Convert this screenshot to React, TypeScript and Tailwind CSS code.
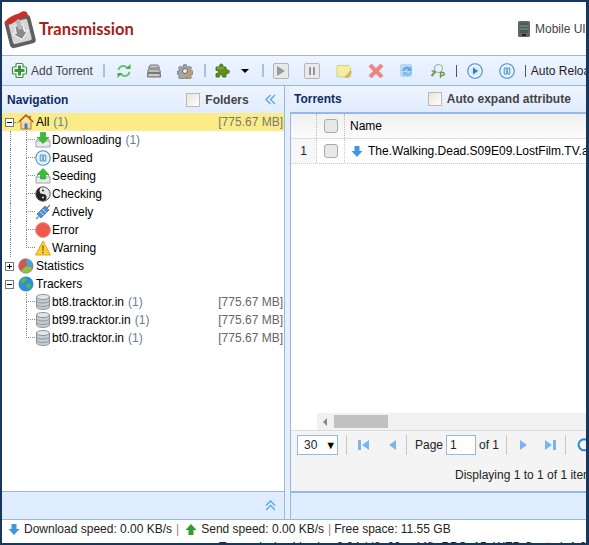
import type { ReactNode } from "react";

const FONT = "font-['Liberation_Sans',Arial,sans-serif]";

// Toolbar + tree icons, all 16x16 unless stated
function PlusIcon() {
  return (
    <svg width="17" height="17" viewBox="0 0 17 17">
      <path d="M6 1.500h5a1 1 0 0 1 1 1V5h2.500a1 1 0 0 1 1 1v5a1 1 0 0 1-1 1H12v2.500a1 1 0 0 1-1 1H6a1 1 0 0 1-1-1V12H2.500a1 1 0 0 1-1-1V6a1 1 0 0 1 1-1H5V2.500a1 1 0 0 1 1-1z" fill="#fff" stroke="#3f8f3f" strokeWidth="1.200" />
      <path d="M7 3.500h3V7h3.500v3H10v3.500H7V10H3.500V7H7z" fill="#2e9e34" />
    </svg>
  );
}

function ReloadIcon() {
  return (
    <svg width="16" height="16" viewBox="0 0 16 16" fill="none" stroke="#6cc06c" strokeWidth="2">
      <path d="M2.500 7c.6-2.600 2.600-4 5-4 1.600 0 2.800.6 3.800 1.800" />
      <path d="M13.500 9c-.6 2.600-2.600 4-5 4-1.600 0-2.800-.6-3.800-1.800" />
      <path d="M9.500 6h5V1z" fill="#4aa84a" stroke="none" />
      <path d="M6.500 10h-5v5z" fill="#4aa84a" stroke="none" />
    </svg>
  );
}

function DrivesIcon() {
  return (
    <svg width="16" height="16" viewBox="0 0 16 16">
      <path d="M4 2h8l1.500 3h-11z" fill="#c9c9c9" stroke="#777" />
      <path d="M2.500 6h11l1 3.500h-13z" fill="#bdbdbd" stroke="#777" />
      <path d="M1.500 10.500h13V14h-13z" fill="#aaa" stroke="#777" />
      <path d="M3 12h10" stroke="#eee" />
    </svg>
  );
}

function GearIcon() {
  return (
    <svg width="16" height="16" viewBox="0 0 16 16">
      <path d="M6.500 1h3l.4 2 1.700.7 1.700-1.100 2 2-1.100 1.700.7 1.700 2 .4v3l-2 .4-.7 1.700 1.100 1.700-2 2-1.700-1.100-1.700.7-.4 2h-3l-.4-2-1.700-.7-1.700 1.100-2-2 1.100-1.700-.7-1.700-2-.4v-3l2-.4.7-1.700-1.100-1.700 2-2 1.700 1.100 1.700-.7z" transform="translate(.8 .8) scale(.9)" fill="#a5a5a5" stroke="#666" strokeWidth=".8" />
      <circle cx="8" cy="8" r="2.500" fill="#eee" stroke="#666" />
      <path d="M15 7 9.500 13l-1.500 2 2.200-.7L16 8.500z" fill="#f0b040" stroke="#b5772a" strokeWidth=".6" />
    </svg>
  );
}

function PuzzleIcon() {
  return (
    <svg width="16" height="16" viewBox="0 0 16 16">
      <path d="M1 4h3.500C4 2 5 1 6.200 1S8.500 2 8 4h3v3c2-.5 3.500.4 3.500 1.700S13 11 11 10.500V14H7.500c.4-1.500-.4-2.300-1.500-2.300S4.100 12.500 4.500 14H1v-3.500c1.400.4 2.300-.4 2.300-1.500S2.400 7 1 7.500z" fill="#5f8f1f" stroke="#3d6512" strokeWidth=".8" />
      <path d="M2 5h7" stroke="#93c04a" />
    </svg>
  );
}

function Caret() {
  return <span className="block h-0 w-0 border-x-[4px] border-t-[4px] border-x-transparent border-t-black" />;
}

function BoxIcon({ children }: { children: ReactNode }) {
  return (
    <span className="flex h-4 w-4 items-center justify-center rounded-[2px] border border-[#b5b5b5] bg-[#e9e9e9]">
      {children}
    </span>
  );
}

function NoteIcon() {
  return (
    <svg width="16" height="16" viewBox="0 0 16 16">
      <path d="M1 2.500h11.500l2 2V14H1z" fill="#f4eea5" stroke="#d6cf86" />
      <path d="M14.500 8 9 14l3 .4L15.500 9z" fill="#e8b765" stroke="#bc9355" strokeWidth=".6" />
    </svg>
  );
}

function CrossIcon() {
  return (
    <svg width="16" height="16" viewBox="0 0 16 16">
      <path d="M1 3.500 3.500 1 8 5.500 12.500 1 15 3.500 10.500 8l4.500 4.500-2.500 2.500L8 10.500 3.500 15 1 12.500 5.500 8z" fill="#ee8585" stroke="#dd7070" strokeWidth=".6" />
    </svg>
  );
}

function RefreshBlue() {
  return (
    <svg width="16" height="16" viewBox="0 0 16 16">
      <rect x="1" y="1" width="12" height="13" rx="2" fill="#b7d9f4" />
      <path d="M3.500 8a4.500 4.500 0 0 1 7.500-3.300L12.500 3v5h-5l1.700-1.700A2.500 2.500 0 0 0 5.500 8z" fill="#5fa8e0" />
      <path d="M13 8.500a4.500 4.500 0 0 1-7.500 3.300L4 13.500V9h5l-1.700 1.500A2.500 2.500 0 0 0 11 8.500z" fill="#7fbce8" />
    </svg>
  );
}

function KeyIcon() {
  return (
    <svg width="16" height="16" viewBox="0 0 16 16">
      <circle cx="8.500" cy="5.500" r="4" fill="#e8f3f5" stroke="#9ab0b8" strokeWidth="1.200" />
      <path d="M5.500 8.500 1.500 13" stroke="#6b9a55" strokeWidth="2" />
      <path d="M1 7.500 5 7l-.5 4z" fill="#75a65a" />
      <path d="M10.500 15V9.500h2.300a1.500 1.500 0 0 1 0 3h-2.300" fill="none" stroke="#6c9a3c" strokeWidth="1.400" />
    </svg>
  );
}

function CircleBtn({ pause }: { pause?: boolean }) {
  return (
    <svg width="16" height="16" viewBox="0 0 16 16">
      <circle cx="8" cy="8" r="7.200" fill="#f3f8fd" stroke="#3f8ccb" strokeWidth="1.100" />
      <circle cx="8" cy="8" r="5" fill="#d9e9f7" />
      {pause ? (
        <path d="M5.300 5h2v6h-2zM8.700 5h2v6h-2z" fill="#fff" stroke="#2f7fc0" strokeWidth=".8" />
      ) : (
        <path d="M6 4.500 11 8l-5 3.500z" fill="#2f7fc0" />
      )}
    </svg>
  );
}

function Sep({ dark }: { dark?: boolean }) {
  return <span className={dark ? "block h-3 w-px bg-[#555]" : "block h-[13px] w-[2px] bg-[#a9bfdc]"} />;
}

function HouseIcon() {
  return (
    <svg width="16" height="16" viewBox="0 0 16 16">
      <path d="M3 7.500V15h10V7.500" fill="#f6d9a6" stroke="#a67a3d" />
      <path d="M.8 8 8 1.200 15.200 8" fill="none" stroke="#b5532f" strokeWidth="1.600" />
      <rect x="6.500" y="9.500" width="3" height="5.500" fill="#4a7ebb" />
      <rect x="11" y="1.800" width="2" height="3.500" fill="#a67a3d" />
    </svg>
  );
}

function TrayIcon({ up }: { up?: boolean }) {
  return (
    <svg width="16" height="16" viewBox="0 0 16 16">
      <path d="M1 9h14v6H1z" fill="#e8ecef" stroke="#9aa5ad" />
      <path d="M1 9l3-3M15 9l-3-3" stroke="#9aa5ad" />
      {up ? (
        <path d="M8 .5 14 6.500h-3.500V11h-5V6.500H2z" fill="#35c032" stroke="#249a22" strokeWidth=".6" />
      ) : (
        <path d="M5.500 .5h5V5.500H14L8 11.500 2 5.500h3.500z" fill="#35c032" stroke="#249a22" strokeWidth=".6" />
      )}
    </svg>
  );
}

function YinYang() {
  return (
    <svg width="16" height="16" viewBox="0 0 16 16">
      <circle cx="8" cy="8" r="7.200" fill="#e6e6e6" stroke="#555" />
      <path d="M8 1a7 7 0 0 0 0 14 3.500 3.500 0 0 0 0-7 3.500 3.500 0 0 1 0-7z" fill="#222" />
      <circle cx="8" cy="4.500" r="1" fill="#222" />
      <circle cx="8" cy="11.500" r="1" fill="#eee" />
    </svg>
  );
}

function ActiveIcon() {
  return (
    <svg width="16" height="16" viewBox="0 0 16 16">
      <path d="M2 10 10 2l4 4-8 8z" fill="#4f8fd6" stroke="#2c66a8" strokeWidth=".7" />
      <path d="M5 7.500 8.500 11M7.500 5 11 8.500" stroke="#cfe3f7" />
      <path d="M1 15l2.500-2.500M12 4l3-3" stroke="#5a7ea8" strokeWidth="1.200" />
    </svg>
  );
}

function ErrorIcon() {
  return (
    <svg width="16" height="16" viewBox="0 0 16 16">
      <circle cx="8" cy="8" r="7.500" fill="#f0584a" stroke="#d9a79f" />
    </svg>
  );
}

function WarnIcon() {
  return (
    <svg width="16" height="16" viewBox="0 0 16 16">
      <path d="M8 1 15.500 15H.5z" fill="#fbd13a" stroke="#e3a11d" strokeLinejoin="round" />
      <path d="M7.200 5.500h1.600l-.3 5.500h-1z" fill="#8a6b15" />
      <rect x="7.200" y="11.800" width="1.600" height="1.600" fill="#8a6b15" />
    </svg>
  );
}

function PieIcon() {
  return (
    <svg width="16" height="16" viewBox="0 0 16 16">
      <path d="M8 8 8 .8A7.200 7.200 0 0 1 15 9.500z" fill="#4ea3dc" stroke="#777" strokeWidth=".5" />
      <path d="M8 8 15 9.500A7.200 7.200 0 0 1 2.500 12.800z" fill="#93c13d" stroke="#777" strokeWidth=".5" />
      <path d="M8 8 2.500 12.800A7.200 7.200 0 0 1 8 .8z" fill="#d8554e" stroke="#777" strokeWidth=".5" />
    </svg>
  );
}

function GlobeIcon() {
  return (
    <svg width="16" height="16" viewBox="0 0 16 16">
      <circle cx="8" cy="8" r="7.500" fill="#2f8fd8" />
      <path d="M4 2.500c2-1 4-.6 5 .5-.4 1.500-2 1.500-2.500 3-.4 1.300-2 1.500-3 .5-.8-.8-.5-3 .5-4zM8.500 8c1.500-.6 4 0 4.500 1.500-.3 2-1.500 3.500-3 4-1-1-.5-2.500-1-3.500-.3-.7-1-1.500-.5-2z" fill="#5fb83e" />
    </svg>
  );
}

function DbIcon() {
  return (
    <svg width="16" height="16" viewBox="0 0 16 16">
      <path d="M1.500 3v10c0 1.300 2.900 2.500 6.500 2.500s6.500-1.200 6.500-2.500V3z" fill="#c4cbd1" stroke="#8b949b" />
      <ellipse cx="8" cy="3" rx="6.500" ry="2.500" fill="#e3e7ea" stroke="#8b949b" />
      <path d="M1.500 6.500c0 1.300 2.900 2.500 6.500 2.500s6.500-1.200 6.500-2.500M1.500 10c0 1.300 2.900 2.500 6.500 2.500s6.500-1.200 6.500-2.500" fill="none" stroke="#8b949b" />
    </svg>
  );
}

function ArrowIcon({ up }: { up?: boolean }) {
  const color = up ? "#2f9e2f" : "#3f97e0";
  return (
    <svg width="12" height="13" viewBox="0 0 12 13">
      {up ? (
        <path d="M6 1 11.500 7H8.500v5h-5V7H.5z" fill={color} />
      ) : (
        <path d="M3.500 1h5v5h3L6 12 .5 6h3z" fill={color} />
      )}
    </svg>
  );
}

function Logo() {
  return (
    <svg width="33" height="42" viewBox="0 0 36 46">
      <g transform="rotate(-14 18 26)">
        <rect x="4" y="11" width="29" height="32" rx="4" fill="#5f5f5f" />
        <rect x="8" y="15" width="21" height="24" rx="2" fill="#d6d6d6" />
        <path d="M14 20h9v8h4l-8.500 8L10 28h4z" fill="#8a8a8a" stroke="#fff" strokeWidth="1" />
      </g>
      <path d="M17 12l5 12-5 1-4-11z" fill="#b8b8b8" />
      <path d="M3 16c1-4 8-7 14-9l4-2c4-1 6 1 6 4 0 2-2 3-5 3l-5 1-7 5c-4 2-8 2-7-2z" fill="#c9302c" />
    </svg>
  );
}

function Checkbox() {
  return <span className="block h-[14px] w-[14px] rounded-[3px] border border-[#aaa] bg-[#e8e8e8]" />;
}

function HeaderCheck() {
  return <span className="block h-[14px] w-[14px] border border-[#c2b9a7] bg-gradient-to-br from-[#e6e4df] to-white" />;
}

function Expander({ open }: { open?: boolean }) {
  return (
    <span className="flex h-[9px] w-[9px] items-center justify-center border border-[#777] bg-white">
      <span className="relative h-px w-[5px] bg-black">
        {!open && <span className="absolute -top-[2px] left-[2px] h-[5px] w-px bg-black" />}
      </span>
    </span>
  );
}

// dotted guide pieces of the tree
function Elbow({ last }: { last?: boolean }) {
  return (
    <span className="flex h-full w-[9px] shrink-0 flex-col">
      <span className="h-1/2 border-b border-l border-dotted border-[#888]" />
      {!last && <span className="h-1/2 border-l border-dotted border-[#888]" />}
    </span>
  );
}

interface LeafProps {
  icon: ReactNode;
  label: string;
  count?: string;
  size?: string;
  last?: boolean;
  guide?: boolean;
}

function TreeLeaf({ icon, label, count, size, last, guide = true }: LeafProps) {
  return (
    <div className="flex h-[18px] items-center pl-[8px] pr-px">
      <span className={guide ? "h-full w-[16px] shrink-0 border-l border-dotted border-[#888]" : "h-full w-[16px] shrink-0"} />
      <Elbow last={last} />
      <span className="flex w-[17px] shrink-0 items-center">{icon}</span>
      <span className="text-black">{label}</span>
      {count && <span className="ml-1 text-[#6b7d94]">{count}</span>}
      {size && <span className="ml-auto text-[#666]">{size}</span>}
    </div>
  );
}

function PagerTriangle({ dir, bar }: { dir: "l" | "r"; bar?: boolean }) {
  return (
    <span className="flex items-center gap-[1px]">
      {bar && dir === "l" && <span className="h-[10px] w-[3px] bg-[#7cb5ec]" />}
      <span className={dir === "l" ? "h-0 w-0 border-y-[5px] border-r-[7px] border-y-transparent border-r-[#7cb5ec]" : "h-0 w-0 border-y-[5px] border-l-[7px] border-y-transparent border-l-[#7cb5ec]"} />
      {bar && dir === "r" && <span className="h-[10px] w-[3px] bg-[#7cb5ec]" />}
    </span>
  );
}

const PagerSep = () => <span className="block h-[20px] w-px bg-[#c8c8c8]" />;

export default function App() {
  return (
    <div className={`${FONT} h-[545px] w-[589px] overflow-hidden border-b-2 border-l-2 border-r-[3px] border-t-2 border-[#17375e] bg-white text-[12px] leading-[18px] text-[#222]`}>
      {/* Logo bar */}
      <header className="flex h-[54px] items-center overflow-hidden border-b border-[#95b8e7] bg-white">
        <div className="flex w-[512px] shrink-0 items-start self-start">
          <span className="ml-[1px] mt-[5px]"><Logo /></span>
          <span className="ml-[3px] mt-[18px] font-['Lato',sans-serif] text-[16.500px] font-bold text-[#a52019]">Transmission</span>
        </div>
        <div className="ml-[2px] flex shrink-0 items-center gap-[3px] whitespace-nowrap text-[#444]">
          <svg width="16" height="18" viewBox="0 0 16 18">
            <rect x="2" y="1" width="12" height="16" rx="1.500" fill="#666" />
            <rect x="4" y="3" width="8" height="10" fill="#3f5f4f" />
            <path d="M4 6h8M4 9h8" stroke="#999" />
            <rect x="6" y="14" width="4" height="2" fill="#222" />
          </svg>
          Mobile UI
        </div>
      </header>

      {/* Toolbar */}
      <div className="flex h-[30px] items-center overflow-hidden whitespace-nowrap border-b border-[#95b8e7] bg-gradient-to-b from-[#eff5ff] to-[#e0ecff] pl-[9px] text-[#555] [&>*]:shrink-0">
        <PlusIcon />
        <span className="ml-[3px] text-[#444]">Add Torrent</span>
        <span className="ml-[10px]"><Sep /></span>
        <span className="ml-[11px]"><ReloadIcon /></span>
        <span className="ml-[14px]"><DrivesIcon /></span>
        <span className="ml-[15px]"><GearIcon /></span>
        <span className="ml-[11px]"><Sep /></span>
        <span className="ml-[9px]"><PuzzleIcon /></span>
        <span className="ml-[10px]"><Caret /></span>
        <span className="ml-[13px]"><Sep /></span>
        <span className="ml-[9px]"><BoxIcon><span className="h-0 w-0 border-y-[5px] border-l-[8px] border-y-transparent border-l-[#999]" /></BoxIcon></span>
        <span className="ml-[15px]"><BoxIcon><span className="h-[8px] w-[6px] border-x-2 border-[#999]" /></BoxIcon></span>
        <span className="ml-[16px]"><NoteIcon /></span>
        <span className="ml-[16px]"><CrossIcon /></span>
        <span className="ml-[15px]"><RefreshBlue /></span>
        <span className="ml-[15px]"><KeyIcon /></span>
        <span className="ml-[10px]"><Sep dark /></span>
        <span className="ml-[10px]"><CircleBtn /></span>
        <span className="ml-[16px]"><CircleBtn pause /></span>
        <span className="ml-[10px]"><Sep dark /></span>
        <span className="ml-[5px] text-[#222]">Auto Reload</span>
      </div>

      {/* Panels */}
      <div className="flex h-[433px] bg-[#e6eef8]">
        <section className="flex w-[283px] shrink-0 flex-col border-r border-[#95b8e7]">
          <div className="flex h-[27px] shrink-0 items-center bg-gradient-to-b from-[#eff5ff] to-[#e0ecff] pl-[5px] text-[#0e2d5f]">
            <span className="font-bold">Navigation</span>
            <span className="ml-[118px]"><HeaderCheck /></span>
            <span className="ml-[5px] font-bold text-[#444]">Folders</span>
            <svg className="ml-[16px]" width="11" height="11" viewBox="0 0 11 11" fill="none" stroke="#5aa3e8" strokeWidth="1.300">
              <path d="M5.500 1 1 5.500 5.500 10M10 1 5.500 5.500 10 10" />
            </svg>
          </div>
          <div className="flex-1 overflow-hidden bg-white">
            <div className="flex h-[18px] items-center bg-[#fbec88] pl-[3px] pr-px">
              <Expander open />
              <span className="h-px w-[4px] border-b border-dotted border-[#888]" />
              <HouseIcon />
              <span className="ml-[2px] text-black">All</span>
              <span className="ml-1 text-[#6b7d94]">(1)</span>
              <span className="ml-auto text-[#777]">[775.67 MB]</span>
            </div>
            <TreeLeaf icon={<TrayIcon />} label="Downloading" count="(1)" />
            <TreeLeaf icon={<CircleBtn pause />} label="Paused" />
            <TreeLeaf icon={<TrayIcon up />} label="Seeding" />
            <TreeLeaf icon={<YinYang />} label="Checking" />
            <TreeLeaf icon={<ActiveIcon />} label="Actively" />
            <TreeLeaf icon={<ErrorIcon />} label="Error" />
            <TreeLeaf icon={<WarnIcon />} label="Warning" last />
            <div className="flex h-[18px] items-center pl-[3px]">
              <Expander />
              <span className="w-[4px]" />
              <PieIcon />
              <span className="ml-[2px] text-black">Statistics</span>
            </div>
            <div className="flex h-[18px] items-center pl-[3px]">
              <Expander open />
              <span className="w-[4px]" />
              <GlobeIcon />
              <span className="ml-[2px] text-black">Trackers</span>
            </div>
            <TreeLeaf guide={false} icon={<DbIcon />} label="bt8.tracktor.in" count="(1)" size="[775.67 MB]" />
            <TreeLeaf guide={false} icon={<DbIcon />} label="bt99.tracktor.in" count="(1)" size="[775.67 MB]" />
            <TreeLeaf guide={false} icon={<DbIcon />} label="bt0.tracktor.in" count="(1)" size="[775.67 MB]" last />
          </div>
          <div className="flex h-[28px] shrink-0 items-center justify-end border-t border-[#95b8e7] bg-[#e0ecff] pr-[8px]">
            <svg width="11" height="11" viewBox="0 0 11 11" fill="none" stroke="#5aa3e8" strokeWidth="1.300">
              <path d="M1 5.500 5.500 1 10 5.500M1 10 5.500 5.500 10 10" />
            </svg>
          </div>
        </section>

        <section className="ml-[5px] flex min-w-0 flex-1 flex-col overflow-hidden">
          <div className="flex h-[26px] shrink-0 items-center whitespace-nowrap bg-gradient-to-b from-[#eff5ff] to-[#e0ecff] pl-[4px] font-bold text-[#0e2d5f]">
            Torrents
            <span className="ml-[86px] shrink-0"><HeaderCheck /></span>
            <span className="ml-[5px] text-[#444]">Auto expand attribute</span>
          </div>
          <div className="flex flex-1 flex-col overflow-hidden border-l border-t-2 border-[#95b8e7] bg-white">
            <div className="flex h-[25px] shrink-0 border-b border-[#ddd] bg-gradient-to-b from-[#f0f0f0] to-[#fbfbfb]">
              <span className="w-[26px] shrink-0 border-r border-dotted border-[#bbb]" />
              <span className="flex w-[28px] shrink-0 items-center justify-center border-r border-dotted border-[#bbb]"><Checkbox /></span>
              <span className="flex items-center pl-[5px] text-black">Name</span>
            </div>
            <div className="flex h-[25px] shrink-0 items-center whitespace-nowrap border-b border-dotted border-[#ccc] [&>*]:shrink-0">
              <span className="w-[26px] self-stretch border-r border-dotted border-[#ccc] bg-[#f7f7f7] pt-[3px] text-center">1</span>
              <span className="flex w-[28px] items-center justify-center self-stretch border-r border-dotted border-[#ccc]"><Checkbox /></span>
              <span className="ml-[6px]"><ArrowIcon /></span>
              <span className="ml-[5px] text-black">The.Walking.Dead.S09E09.LostFilm.TV.avi</span>
            </div>
            <div className="flex-1" />
            {/* horizontal scrollbar */}
            <div className="ml-[26px] flex h-[17px] shrink-0 items-center bg-[#f1f1f1]">
              <span className="ml-[6px] h-0 w-0 border-y-[4px] border-r-[4px] border-y-transparent border-r-[#888]" />
              <span className="ml-[7px] h-[13px] w-[54px] bg-[#c1c1c1]" />
            </div>
            {/* pager */}
            <div className="h-[61px] shrink-0 border-t border-[#ddd] bg-[#f4f4f4]">
              <div className="flex h-[28px] items-center whitespace-nowrap pl-[6px] text-[#222] [&>*]:shrink-0">
                <span className="flex h-[20px] w-[41px] items-center gap-[8px] border border-[#95b8e7] bg-white pl-[6px]">
                  30
                  <span className="text-[11px] leading-none text-black">▼</span>
                </span>
                <span className="ml-[8px]"><PagerSep /></span>
                <span className="ml-[11px]"><PagerTriangle dir="l" bar /></span>
                <span className="ml-[20px]"><PagerTriangle dir="l" /></span>
                <span className="ml-[10px]"><PagerSep /></span>
                <span className="ml-[8px]">Page</span>
                <span className="ml-[3px] flex h-[20px] w-[30px] items-center border border-[#95b8e7] bg-white pl-[3px]">1</span>
                <span className="ml-[3px]">of 1</span>
                <span className="ml-[7px]"><PagerSep /></span>
                <span className="ml-[13px]"><PagerTriangle dir="r" /></span>
                <span className="ml-[18px]"><PagerTriangle dir="r" bar /></span>
                <span className="ml-[9px]"><PagerSep /></span>
                <svg className="ml-[11px]" width="14" height="14" viewBox="0 0 14 14" fill="none" stroke="#2f86d6" strokeWidth="2">
                  <path d="M11.500 3.500A5.500 5.500 0 1 0 12.500 8" />
                </svg>
              </div>
              <div className="mt-[7px] whitespace-nowrap pl-[164px] text-[#222]">Displaying 1 to 1 of 1 items</div>
            </div>
          </div>
          <div className="h-[28px] shrink-0 border-l border-t-2 border-[#95b8e7] bg-[#e0ecff]" />
        </section>
      </div>

      {/* Status bar */}
      <footer className="h-[24px] overflow-hidden border-t border-[#95b8e7] bg-white">
        <div className="flex h-[18px] items-center whitespace-nowrap pl-[6px] text-[#222]">
          <ArrowIcon />
          <span className="ml-[4px]">Download speed: 0.00 KB/s</span>
          <span className="ml-[4px] text-[#888]">|</span>
          <span className="ml-[6px]"><ArrowIcon up /></span>
          <span className="ml-[4px]">Send speed: 0.00 KB/s</span>
          <span className="ml-[4px] text-[#888]">|</span>
          <span className="ml-[3px]">Free space: 11.55 GB</span>
        </div>
        <div className="whitespace-nowrap pl-[217px] text-[#222]">Transmission Version 2.94 (d8e60ee44f), RPC: 15, WEB Control: 1.6.0</div>
      </footer>
    </div>
  );
}
